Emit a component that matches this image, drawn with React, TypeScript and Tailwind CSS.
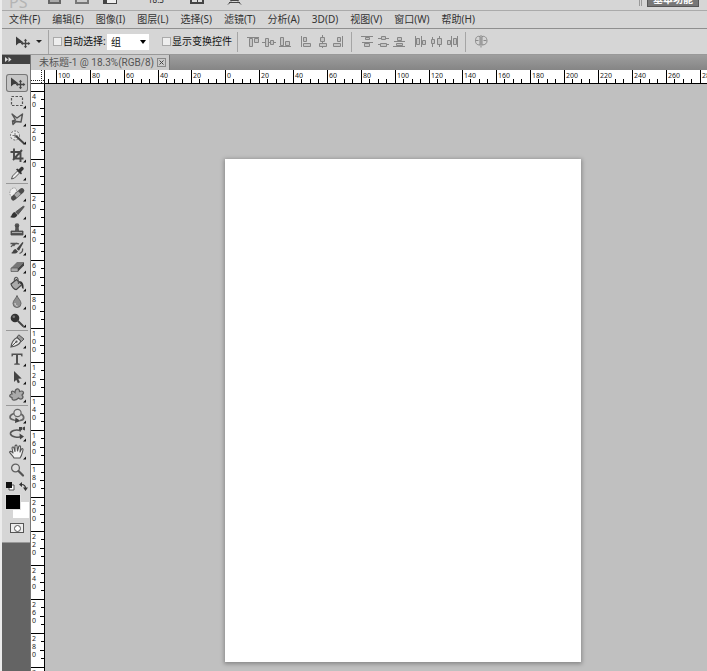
import React from "react";

const UI_FONT = "font-['Noto_Sans','Noto_Sans_CJK_SC',sans-serif]";

const menus = ["文件(F)", "编辑(E)", "图像(I)", "图层(L)", "选择(S)", "滤镜(T)", "分析(A)", "3D(D)", "视图(V)", "窗口(W)", "帮助(H)"];

/* Ruler scale: one labelled division every 20 mm, as many as the window shows. */
const STEP = 33.87;
const divisions = (first: number, from: number, limit: number) => {
  const list: { label: number; size: number }[] = [];
  for (let i = 0; from + i * STEP < limit; i++) {
    const start = Math.round(from + i * STEP);
    const end = Math.round(from + (i + 1) * STEP);
    list.push({ label: Math.abs((first + i) * 20), size: end - start });
  }
  return list;
};

type Tool = { name: string; icon: React.ReactNode; plain?: boolean; active?: boolean };

const moveIcon = (
  <>
    <path d="M4 3.500v9l2.600-2.200 5-.8z" fill="#3c3c3c" />
    <path d="M13.500 7v7M10 10.500h7" stroke="#444" strokeWidth="1.300" />
    <path d="M13.500 5.700l1.700 2h-3.400zM13.500 15.300l1.700-2h-3.400zM8.700 10.500l2-1.700v3.400zM18.300 10.500l-2-1.700v3.400z" fill="#444" />
  </>
);

const groups: Tool[][] = [
  [
    { name: "移动工具", active: true, plain: true, icon: moveIcon },
    { name: "矩形选框工具", icon: <rect x="4.500" y="4.500" width="11" height="9" fill="none" stroke="#555" strokeWidth="1.200" strokeDasharray="2.500 1.500" /> },
    { name: "套索工具", icon: <path d="M5 4l5 4 5.500-4-1.500 8-5-.5-3 3-.5-3.500 3-1zM6 11l2 1" fill="#ccc" stroke="#555" strokeWidth="1.400" strokeLinejoin="round" /> },
    {
      name: "快速选择工具",
      icon: (
        <>
          <circle cx="8" cy="7.500" r="4.500" fill="#e6e6e6" stroke="#666" strokeDasharray="2 1.300" />
          <path d="M9 8l7.500 7" stroke="#444" strokeWidth="2" strokeLinecap="round" />
          <path d="M8 5v5M5.500 7.500h5" stroke="#777" />
        </>
      ),
    },
    { name: "裁剪工具", icon: <path d="M7 2.500v10h9.500M3.500 6h10v10M6 14l9-10" fill="none" stroke="#484848" strokeWidth="1.900" /> },
    {
      name: "吸管工具",
      icon: (
        <>
          <path d="M4.500 15l1-3 5-5 2 2-5 5z" fill="#eee" stroke="#555" />
          <path d="M9 5.500l5 5 1-1.200-1-1.300 2.500-2.500c1-1.700-1-3.500-2.500-2.500L11.500 5.500l-1.200-1z" fill="#333" />
        </>
      ),
    },
  ],
  [
    {
      name: "污点修复画笔工具",
      icon: (
        <>
          <path d="M5 3.500c3-1.500 5 0 4.500 3L6 12.500C2.500 12 1.500 6 5 3.500z" fill="#eee" stroke="#888" strokeWidth=".8" strokeDasharray="1.500 1" />
          <path d="M6.500 13L14.800 5.600" stroke="#4c4c4c" strokeWidth="5" strokeLinecap="round" />
          <path d="M8.500 11.300l4-3.700" stroke="#a9a9a9" strokeWidth="4" />
        </>
      ),
    },
    {
      name: "画笔工具",
      icon: (
        <>
          <path d="M3 14c2-.5 1.500-4 4.500-5l3 3C9 15 5.500 15.500 3 14z" fill="#333" />
          <path d="M8.500 9L16.500 3l.8.8L11 11.500z" fill="#5a5a5a" stroke="#444" strokeWidth=".7" />
        </>
      ),
    },
    {
      name: "仿制图章工具",
      icon: (
        <>
          <circle cx="10" cy="4.500" r="2.300" fill="#555" />
          <path d="M9 5h2l.5 5H16v4H4v-4h4.500z" fill="#555" stroke="#444" strokeWidth=".8" />
          <path d="M5 11.500h10" stroke="#aaa" />
        </>
      ),
    },
    {
      name: "历史记录画笔工具",
      icon: (
        <>
          <path d="M4 14c2-.5 2-3.500 4.500-4l2.500 2.500C9.500 15 6 15 4 14zM9.500 10l6-7 1 .8-4.500 8z" fill="#444" />
          <path d="M3.500 4.500h5L6.500 7M4 8c2-3.500 6-4 8-3M12.500 14.500c2.500-1 3.500-3 3-5" fill="none" stroke="#555" strokeWidth="1.300" />
        </>
      ),
    },
    {
      name: "橡皮擦工具",
      icon: (
        <>
          <path d="M4 11l6-6h7l-6 6z" fill="#777" />
          <path d="M4 11h7v3.500H4z" fill="#aaa" stroke="#555" strokeWidth=".7" />
          <path d="M11 11l6-6v3.500l-6 6z" fill="#444" />
        </>
      ),
    },
    {
      name: "油漆桶工具",
      icon: (
        <>
          <path d="M4 9l5.500-4.500L15 9.500 9.500 14.500c-2 .5-5-3-5.500-5.500z" fill="#aaa" stroke="#444" strokeWidth="1.200" />
          <path d="M7.500 7c-1-5 2.500-6 3.500-3l.5 5" fill="none" stroke="#555" strokeWidth="1.100" />
          <path d="M12 6c3.500 0 5 3 4.500 8-1.500-.5-2-2-1.800-4.500z" fill="#333" />
        </>
      ),
    },
    { name: "模糊工具", icon: <><path d="M10 2.500c1 3 4 5 4 8a4 4 0 0 1-8 0c0-3 3-5 4-8z" fill="#8e8e8e" stroke="#666" /><path d="M8 10c0 2 1 3 2.500 3" fill="none" stroke="#ddd" /></> },
    { name: "减淡工具", icon: <><circle cx="8" cy="7" r="4.300" fill="#333" /><circle cx="6.800" cy="5.800" r="1.300" fill="#777" /><path d="M11 10l5 5" stroke="#444" strokeWidth="1.800" strokeLinecap="round" /></> },
  ],
  [
    {
      name: "钢笔工具",
      icon: (
        <>
          <path d="M4 15c.5-4 1.500-7 6-9.500l4 3.500c-2 4.500-5.500 5.500-10 6z" fill="#e8e8e8" stroke="#555" strokeWidth="1.200" />
          <path d="M10 5l1.800-2.200L17 7l-2.500 2.500z" fill="#999" stroke="#555" />
          <path d="M4 15l5-5" stroke="#555" />
          <circle cx="9.500" cy="9.700" r="1.100" fill="#555" />
        </>
      ),
    },
    { name: "文字工具", icon: <path d="M4.500 3.500h11v3h-1l-.7-1.500H11v8.300l1.800.5v.9H7.200v-.9l1.800-.5V5H6.200l-.7 1.500h-1z" fill="#505050" /> },
    { name: "路径选择工具", icon: <path d="M7 3v11l2.300-2.300 1.600 3.500 2-.9-1.600-3.500 3.400-.3z" fill="#444" /> },
    { name: "自定形状工具", icon: <path d="M8 6.500c0-4.500 4.500-5 4.500-1 3.500-1.500 5.500 1 2.500 3.500 2.500 3-.5 5.500-3.500 3-2.500 2.500-7 3.500-6.500-.5C1.500 11 2.500 8 5 8 3.500 5 5.500 4 8 6.500z" fill="#aaa" stroke="#5c5c5c" strokeWidth="1.200" /> },
  ],
  [
    {
      name: "3D 旋转工具",
      icon: (
        <>
          <circle cx="10.500" cy="6" r="3.600" fill="#ddd" stroke="#666" strokeWidth="1.200" />
          <path d="M7 6.500C2 8 1.500 12 7 13l3 .3M14 7c4 2.500 3.500 6-1 6.500" fill="none" stroke="#666" strokeWidth="1.700" />
          <path d="M8.500 10.500l5 3.500-5.500 2z" fill="#444" />
        </>
      ),
    },
    {
      name: "3D 旋转相机工具",
      icon: (
        <>
          <path d="M14 6C9 3.500 3 6 3.500 9c1 3 8 4 11 2.500" fill="none" stroke="#555" strokeWidth="1.600" />
          <path d="M12.500 8.500l4.500 3-4 3zM12 2h3v3h-3zM15.500 2.500L18 1.500v4l-2.500-1z" fill="#444" />
        </>
      ),
    },
    { name: "抓手工具", icon: <path d="M7 15c-1-2.500-3.500-4-4.500-6 1-1.200 2.300-.5 3.500 1L5 5c.3-1.300 1.700-1.300 2 0l1 3.500L8 3c.5-1.200 1.800-1.200 2 0l.5 5 1.300-4.500c.5-1 1.700-.8 1.800.3L13 9l1.500-3c.8-.8 1.800-.2 1.500.9C15 11 15 12.500 13 15z" fill="#efefef" stroke="#555" strokeWidth="1.100" strokeLinejoin="round" /> },
    { name: "缩放工具", plain: true, icon: <><circle cx="8.500" cy="7" r="3.900" fill="#dedede" stroke="#606060" strokeWidth="1.300" /><path d="M11.500 10l4.500 4.500" stroke="#555" strokeWidth="2.200" strokeLinecap="round" /></> },
  ],
];

const alignGroups: { name: string; icon: React.ReactNode }[][] = [
  [
    { name: "顶对齐", icon: <><path d="M2 4.500h12" /><path d="M4.500 5.500h3v8h-3zM9.500 5.500h4v4h-4z" /></> },
    { name: "垂直居中对齐", icon: <><path d="M1 9.500h14" /><path d="M4.500 5.500h3v8h-3zM9.500 7.500h3v4h-3z" /></> },
    { name: "底对齐", icon: <><path d="M2 13.500h12" /><path d="M3.500 4.500h3v8h-3zM8.500 8.500h4v4h-4z" /></> },
  ],
  [
    { name: "左对齐", icon: <><path d="M3.500 3v11" /><path d="M5.500 4.500h3v4h-3zM5.500 10.500h7v3h-7z" /></> },
    { name: "水平居中对齐", icon: <><path d="M8.500 2v13" /><path d="M6.500 4.500h4v4h-4zM5.500 10.500h7v3h-7z" /></> },
    { name: "右对齐", icon: <><path d="M12.500 3v11" /><path d="M7.500 4.500h3v4h-3zM3.500 10.500h7v3h-7z" /></> },
  ],
  [
    { name: "按顶分布", icon: <><path d="M2 3.500h12M3 9.500h11" /><path d="M6.500 4.500h4v2h-4zM5.500 10.500h5v3h-5z" /></> },
    { name: "垂直居中分布", icon: <><path d="M3 5.500h11M3 11.500h11" /><path d="M6.500 3.500h4v3h-4zM5.500 10.500h6v3h-6z" /></> },
    { name: "按底分布", icon: <><path d="M3 8.500h11M2 13.500h12" /><path d="M6.500 4.500h4v3h-4zM5.500 10.500h6v2h-6z" /></> },
  ],
  [
    { name: "按左分布", icon: <><path d="M3.500 3v11M9.500 3v11" /><path d="M4.500 5.500h3v6h-3zM10.500 7.500h3v4h-3z" /></> },
    { name: "水平居中分布", icon: <><path d="M4.500 4v10M11.500 3v11" /><path d="M3.500 6.500h3v4h-3zM9.500 5.500h4v6h-4z" /></> },
    { name: "按右分布", icon: <><path d="M7.500 3v11M13.500 3v11" /><path d="M3.500 7.500h3v4h-3zM9.500 5.500h3v6h-3z" /></> },
  ],
];

const Grip = ({ className }: { className: string }) => (
  <span aria-hidden="true" className={`bg-[radial-gradient(#a8a8a8_40%,transparent_45%)] bg-size-[2px_2px] ${className}`} />
);

function AppBar() {
  return (
    <header className="flex h-[10px] shrink-0 items-end overflow-hidden pr-2 pl-[7px] text-[#555]">
      <span className="mb-[-2px] w-[39px] text-[16px] leading-[20px] text-[#b4b4b4]">PS</span>
      <button aria-label="启动 Bridge" className="mb-[6px] h-3 w-[13px] border-2 border-[#666] bg-[#aaa]" />
      <button aria-label="启动 Mini Bridge" className="mb-[6px] ml-[14px] h-3 w-[14px] border-2 border-[#777] bg-[#ccc]" />
      <button aria-label="查看额外内容" className="mb-[6px] ml-[14px] h-3 w-[14px] border border-l-4 border-[#444] bg-[#eee]" />
      <button className="mb-[5px] ml-[31px] w-[39px] text-left text-[8px] leading-[11px] text-[#222]">18.3</button>
      <button aria-label="排列文档" className="mb-[6px] ml-[3px] grid h-3 w-[14px] grid-cols-2 gap-px border-2 border-[#444] bg-[#444]">
        <i className="bg-[#ddd]" />
        <i className="bg-[#ddd]" />
      </button>
      <button aria-label="屏幕模式" className="mb-[5px] ml-[23px]">
        <svg width="15" height="14" fill="none" stroke="#444">
          <path d="M3.500 2.500h8v7h-8zM1 13.500l3-3M14 13.500l-3-3M2 11.500h11" />
        </svg>
      </button>
      <span className="mb-[4px] ml-auto h-3 w-[3px] border-x border-[#999]" />
      <button className="mb-[3px] ml-[5px] h-4 w-[52px] border border-[#555] bg-[#777] text-[10px] leading-[12px] font-bold text-white">基本功能</button>
    </header>
  );
}

function OptionsBar() {
  return (
    <form className="flex h-[27px] shrink-0 items-center border-t border-b border-t-[#8f8f8f] border-b-[#999] pl-1 text-[10px] text-[#111]">
      <Grip className="h-5 w-[3px]" />
      <button type="button" aria-label="移动工具预设" className="ml-[3px] flex w-9 items-center">
        <svg width="20" height="18" viewBox="0 0 20 18">{moveIcon}</svg>
        <span className="ml-1 border-x-[3px] border-t-[3px] border-x-transparent border-t-[#222]" />
      </button>
      <span className="h-6 w-px bg-[#a5a5a5]" />
      <label className="ml-1 flex w-[54px] items-center gap-px whitespace-nowrap">
        <input type="checkbox" className="size-[9px] shrink-0 appearance-none border border-[#aaa] bg-[#eee]" />
        自动选择:
      </label>
      <div className="grid h-4 w-[42px] items-center bg-white [&>*]:col-start-1 [&>*]:row-start-1">
        <select aria-label="自动选择对象" className="h-4 w-full appearance-none bg-transparent pl-1 text-[10px] leading-[16px]">
          <option>组</option>
          <option>图层</option>
        </select>
        <span className="pointer-events-none mr-[3px] justify-self-end border-x-[3px] border-t-4 border-x-transparent border-t-black" />
      </div>
      <label className="ml-[13px] flex w-[75px] items-center gap-px whitespace-nowrap">
        <input type="checkbox" className="size-[9px] shrink-0 appearance-none border border-[#aaa] bg-[#eee]" />
        显示变换控件
      </label>
      <span className="mr-[7px] h-5 w-px bg-[#a5a5a5]" />
      {alignGroups.map((group, i) => (
        <React.Fragment key={i}>
          {i === 2 && <span className="mr-[7px] h-5 w-px bg-[#a5a5a5]" />}
          <div className="mr-[5px] flex">
            {group.map((b) => (
              <button type="button" key={b.name} aria-label={b.name}>
                <svg width="16" height="17" viewBox="0 0 16 17" fill="#c4c4c4" stroke="#868686">{b.icon}</svg>
              </button>
            ))}
          </div>
        </React.Fragment>
      ))}
      <span className="h-5 w-px bg-[#a5a5a5]" />
      <button type="button" aria-label="自动对齐图层" className="ml-[7px]">
        <svg width="16" height="17" viewBox="0 0 16 17" fill="#d4d4d4" stroke="#8a8a8a">
          <path d="M7 3.500C3 2.500 2.500 6 2.500 8s1 4 4.500 4zM9 3.500c4-1 5 2.500 5 4.500s-1.500 4-5 4z" />
          <path d="M8 2v12.500M2.500 7.500h3M10.500 7.500h3" />
        </svg>
      </button>
    </form>
  );
}

function Toolbox() {
  return (
    <aside className="flex w-[29px] shrink-0 flex-col border-r border-[#777] bg-[#646464]">
      <button aria-label="展开面板" className="flex h-[9px] shrink-0 items-center bg-[#424242] pl-[3px]">
        <svg width="7" height="6" fill="#ddd">
          <path d="M0 0l3 2.500L0 5zM3.500 0l3 2.500-3 2.500z" />
        </svg>
      </button>
      <div className="flex flex-col items-center border-b border-[#999] bg-[#d6d6d6] pt-[3px] pb-[9px] pl-[2px]">
        <Grip className="mb-1 h-[3px] w-5" />
        {groups.map((group, i) => (
          <div key={i} className={i ? "mt-px border-t border-[#999] pt-px" : ""}>
            {group.map((tool) => (
              <button
                key={tool.name}
                aria-label={tool.name}
                className={`flex h-[18px] w-[22px] items-center justify-center ${tool.active ? "rounded-[3px] bg-[#c6c6c6] inset-ring inset-ring-[#777]" : ""}`}
              >
                <svg width="20" height="18" viewBox="0 0 20 18" fill="none">
                  {tool.icon}
                  {!tool.plain && <path d="M19 13.500v3h-3z" fill="#111" />}
                </svg>
              </button>
            ))}
          </div>
        ))}
        <div className="mt-[3px] flex w-[22px] items-center justify-between">
          <button aria-label="默认前景色和背景色">
            <svg width="9" height="9">
              <path d="M3 3h5v5H3z" fill="#fff" stroke="#555" />
              <path d="M0 0h6v6H0z" fill="#111" />
            </svg>
          </button>
          <button aria-label="切换前景色和背景色">
            <svg width="9" height="9" fill="none" stroke="#333" strokeWidth="1.200">
              <path d="M2.500 2.500q4 0 4 4" />
              <path d="M3 0v5L0 2.500zM4 5.500h5L6.500 9z" fill="#333" stroke="none" />
            </svg>
          </button>
        </div>
        <div className="mt-[3px] grid h-6 w-6 grid-cols-1 grid-rows-1 [&>*]:col-start-1 [&>*]:row-start-1">
          <button aria-label="背景色" className="size-4 self-end justify-self-end bg-white" />
          <button aria-label="前景色" className="size-4 border border-[#ddd] bg-black" />
        </div>
        <button aria-label="以快速蒙版模式编辑" className="mt-[5px] flex h-[10px] w-[14px] items-center justify-center border border-[#555] bg-[#eee]">
          <span className="size-[7px] rounded-full border border-[#555] bg-white" />
        </button>
      </div>
    </aside>
  );
}

function HorizontalRuler() {
  return (
    <div aria-label="水平标尺" className="flex h-[14px] min-w-0 flex-1 overflow-hidden border-b border-black bg-white">
      <span className="w-[11px] shrink-0 self-end pl-[3px]">
        <i className="block h-1 w-px bg-black" />
      </span>
      {divisions(-5, 56, window.innerWidth).map((d, i) => (
        <div key={i} className="flex shrink-0 flex-col border-l border-black" style={{ width: d.size }}>
          <span className="h-[9px] pl-px text-[7px] leading-[11px]">{d.label}</span>
          <span className="grid h-1 grid-cols-4">
            <i className="border-r border-black" />
            <i className="border-r border-black" />
            <i className="border-r border-black" />
          </span>
        </div>
      ))}
    </div>
  );
}

function VerticalRuler() {
  return (
    <div aria-label="垂直标尺" className="flex w-[14px] shrink-0 flex-col overflow-hidden border-r border-black bg-white">
      <span className="h-[7px] shrink-0" />
      {divisions(-2, 91, window.innerHeight).map((d, i) => (
        <div key={i} className="flex shrink-0 justify-between border-t border-black" style={{ height: d.size }}>
          <span className="w-[6px] pt-px pl-px text-[7px] leading-[8px] break-all">{d.label}</span>
          <span className="grid w-1 grid-rows-4 justify-items-end">
            <i className="w-[3px] border-b border-black" />
            <i className="w-1 border-b border-black" />
            <i className="w-[3px] border-b border-black" />
          </span>
        </div>
      ))}
    </div>
  );
}

function DocumentWindow() {
  return (
    <section className="flex min-w-0 flex-1 flex-col">
      <div className="flex h-[15px] shrink-0 bg-linear-to-b from-[#9e9e9e] to-[#858585]">
        <div className="flex items-center gap-[3px] border-r border-[#777] bg-[#cacaca] pr-[3px] pl-2 text-[10px] leading-[15px] whitespace-nowrap text-[#555]">
          <span className="font-['Roboto','Noto_Sans_CJK_SC',sans-serif]">未标题-1 @ 18.3%(RGB/8)</span>
          <button aria-label="关闭" className="size-[9px] border border-[#888]">
            <svg width="7" height="7" stroke="#444">
              <path d="M1.500 1.500l4 4M5.500 1.500l-4 4" />
            </svg>
          </button>
        </div>
      </div>
      <div className="flex shrink-0 text-[#222]">
        <svg className="shrink-0 bg-white" width="14" height="14" fill="none" stroke="#222">
          <path d="M10.500 0v14M0 10.500h14" strokeDasharray="1 1" />
          <path d="M13.500 0v14M0 13.500h14" />
        </svg>
        <HorizontalRuler />
      </div>
      <div className="flex min-h-0 flex-1 text-[#222]">
        <VerticalRuler />
        <main className="min-w-0 flex-1 overflow-hidden bg-[#c0c0c0] pt-[75px] pl-[180px]">
          <div aria-label="画布" className="h-[503px] w-[356px] bg-white shadow-[0_1px_4px_1px_#888]" />
        </main>
      </div>
    </section>
  );
}

export default function App() {
  return (
    <div className={`flex h-screen flex-col overflow-hidden border-l-2 border-[#ececec] bg-[#d6d6d6] ${UI_FONT}`}>
      <AppBar />
      <nav className="flex h-[18px] shrink-0 items-center gap-3 border-t border-[#aaa] pl-[7px] text-[10px] whitespace-nowrap text-[#333]">
        {menus.map((m) => (
          <button key={m}>{m}</button>
        ))}
      </nav>
      <OptionsBar />
      <div className="flex min-h-0 flex-1">
        <Toolbox />
        <DocumentWindow />
      </div>
    </div>
  );
}
